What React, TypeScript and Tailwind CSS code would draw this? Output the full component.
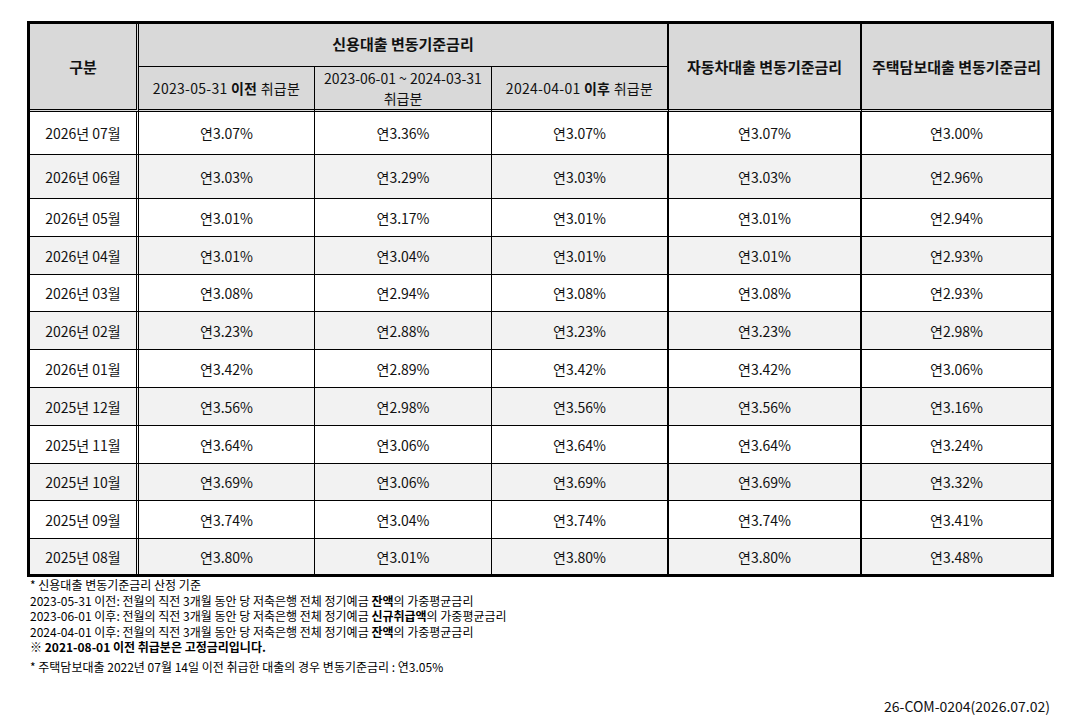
const rows: [string, string, string, string, string, string][] = [
  ["2026년 07월", "연3.07%", "연3.36%", "연3.07%", "연3.07%", "연3.00%"],
  ["2026년 06월", "연3.03%", "연3.29%", "연3.03%", "연3.03%", "연2.96%"],
  ["2026년 05월", "연3.01%", "연3.17%", "연3.01%", "연3.01%", "연2.94%"],
  ["2026년 04월", "연3.01%", "연3.04%", "연3.01%", "연3.01%", "연2.93%"],
  ["2026년 03월", "연3.08%", "연2.94%", "연3.08%", "연3.08%", "연2.93%"],
  ["2026년 02월", "연3.23%", "연2.88%", "연3.23%", "연3.23%", "연2.98%"],
  ["2026년 01월", "연3.42%", "연2.89%", "연3.42%", "연3.42%", "연3.06%"],
  ["2025년 12월", "연3.56%", "연2.98%", "연3.56%", "연3.56%", "연3.16%"],
  ["2025년 11월", "연3.64%", "연3.06%", "연3.64%", "연3.64%", "연3.24%"],
  ["2025년 10월", "연3.69%", "연3.06%", "연3.69%", "연3.69%", "연3.32%"],
  ["2025년 09월", "연3.74%", "연3.04%", "연3.74%", "연3.74%", "연3.41%"],
  ["2025년 08월", "연3.80%", "연3.01%", "연3.80%", "연3.80%", "연3.48%"],
];

// row heights in px, bottom border included
const heights = [
  "h-[43px]",
  "h-[44px]",
  "h-[38px]",
  "h-[38px]",
  "h-[37px]",
  "h-[38px]",
  "h-[38px]",
  "h-[38px]",
  "h-[38px]",
  "h-[37px]",
  "h-[38px]",
  "h-[35px]",
];

const th = "bg-[#d9d9d9] border-black text-center align-middle p-0";
const td = "border-black text-center align-middle p-0 font-normal";

function App() {
  return (
    <div
      className="bg-white w-[1092px] h-[717px] text-[#111] pl-[27px] pt-[21px]"
      style={{ fontFamily: '"Noto Sans CJK KR", "Noto Sans", sans-serif' }}
    >
      <table className="w-[1027px] table-fixed border-separate border-spacing-0 border-[3px] border-black text-[14px] leading-[20px]">
        <colgroup>
          <col className="w-[109px]" />
          <col className="w-[176px]" />
          <col className="w-[177px]" />
          <col className="w-[177px]" />
          <col className="w-[193px]" />
          <col className="w-[189px]" />
        </colgroup>
        <thead>
          <tr className="h-[43px]">
            <th rowSpan={2} className={`${th} font-bold text-[15px] border-r-[3px] border-double border-b-[3px]`}>
              구분
            </th>
            <th colSpan={3} className={`${th} font-bold text-[15px] pb-[2px] border-r-2 border-b border-solid`}>
              신용대출 변동기준금리
            </th>
            <th
              rowSpan={2}
              className={`${th} font-bold text-[15px] border-r-2 border-b-[3px] border-double`}
              style={{ borderRightStyle: "solid" }}
            >
              자동차대출 변동기준금리
            </th>
            <th rowSpan={2} className={`${th} font-bold text-[15px] border-b-[3px] border-double`}>
              주택담보대출 변동기준금리
            </th>
          </tr>
          <tr className="h-[45px]">
            <th
              className={`${th} font-normal tracking-[0.02em] border-r border-b-[3px] border-double`}
              style={{ borderRightStyle: "solid" }}
            >
              2023-05-31 <b>이전</b> 취급분
            </th>
            <th
              className={`${th} font-normal border-r border-b-[3px] border-double`}
              style={{ borderRightStyle: "solid" }}
            >
              2023-06-01 ~ 2024-03-31
              <br />
              취급분
            </th>
            <th
              className={`${th} font-normal tracking-[0.02em] border-r-2 border-b-[3px] border-double`}
              style={{ borderRightStyle: "solid" }}
            >
              2024-04-01 <b>이후</b> 취급분
            </th>
          </tr>
        </thead>
        <tbody>
          {rows.map((r, i) => {
            const last = i === rows.length - 1;
            const bg = i % 2 === 1 ? "bg-[#f2f2f2]" : "bg-white";
            const bb = last ? "" : "border-b";
            return (
              <tr key={r[0]} className={`${heights[i]} ${bg}`}>
                <td
                  className={`${td} ${bb} border-r-[3px] border-double`}
                  style={{ borderBottomStyle: "solid" }}
                >
                  {r[0]}
                </td>
                <td className={`${td} ${bb} border-r border-solid`}>{r[1]}</td>
                <td className={`${td} ${bb} border-r border-solid`}>{r[2]}</td>
                <td className={`${td} ${bb} border-r-2 border-solid`}>{r[3]}</td>
                <td className={`${td} ${bb} border-r-2 border-solid`}>{r[4]}</td>
                <td className={`${td} ${bb} border-solid`}>{r[5]}</td>
              </tr>
            );
          })}
        </tbody>
      </table>

      <div className="pl-[3px] text-[12px] leading-[15.5px] text-black">
        <p>* 신용대출 변동기준금리 산정 기준</p>
        <p>
          2023-05-31 이전: 전월의 직전 3개월 동안 당 저축은행 전체 정기예금 <b>잔액</b>의 가중평균금리
        </p>
        <p>
          2023-06-01 이후: 전월의 직전 3개월 동안 당 저축은행 전체 정기예금 <b>신규취급액</b>의 가중평균금리
        </p>
        <p>
          2024-04-01 이후: 전월의 직전 3개월 동안 당 저축은행 전체 정기예금 <b>잔액</b>의 가중평균금리
        </p>
        <p className="font-bold">※ 2021-08-01 이전 취급분은 고정금리입니다.</p>
        <p className="mt-[4px]">* 주택담보대출 2022년 07월 14일 이전 취급한 대출의 경우 변동기준금리 : 연3.05%</p>
      </div>

      <div className="w-[1023px] text-right text-[14px] leading-[18px] mt-[23px]">
        26-COM-0204(2026.07.02)
      </div>
    </div>
  );
}

export default App;
